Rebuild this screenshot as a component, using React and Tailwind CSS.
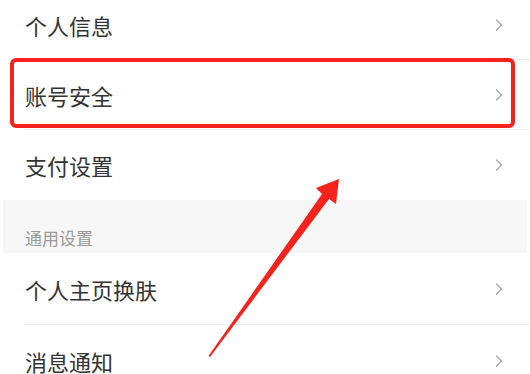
import React from "react";

const Chevron = () => (
  <svg width="8" height="12" viewBox="0 0 8 12" fill="none">
    <polyline points="1.5,1 6.5,6 1.5,11" stroke="#a8a8a8" strokeWidth="1.4" strokeLinecap="round" strokeLinejoin="round" />
  </svg>
);

const Row = ({ label, last, tall }) => (
  <div className="pl-[25px]">
    <div
      className={`flex items-center justify-between pr-[27px] ${tall ? "h-[72px]" : "h-[70px]"} ${last ? "" : "border-b border-[#ececec]"}`}
    >
      <span className="text-[22px] leading-none text-[#333]">{label}</span>
      <Chevron />
    </div>
  </div>
);

const App = () => {
  return (
    <div
      className="relative h-[374px] w-[530px] overflow-hidden bg-white"
      style={{ fontFamily: '"Noto Sans CJK SC", "Noto Sans", sans-serif' }}
    >
      <div className="-mt-[10px]">
        <Row label="个人信息" />
        <Row label="账号安全" />
        <Row label="支付设置" last />

        <div className="mx-[3px] h-[53px] bg-[#f7f7f7] pl-[22px] pt-[26px]">
          <span className="block text-[17px] leading-[24px] text-[#9a9a9a]">通用设置</span>
        </div>

        <Row label="个人主页换肤" tall />
        <Row label="消息通知" tall last />
      </div>

      {/* red highlight box */}
      <div className="absolute left-[10px] top-[58px] h-[70px] w-[505px] rounded-[6px] border-4 border-[#f5231c]" />

      {/* red arrow */}
      <svg className="pointer-events-none absolute inset-0" width="530" height="374" viewBox="0 0 530 374">
        <polygon
          points="208.5,356 322,194 316,188 339,179 336,204 329,199 210,357"
          fill="#f5231c"
          strokeLinejoin="round"
        />
      </svg>
    </div>
  );
};

export default App;
